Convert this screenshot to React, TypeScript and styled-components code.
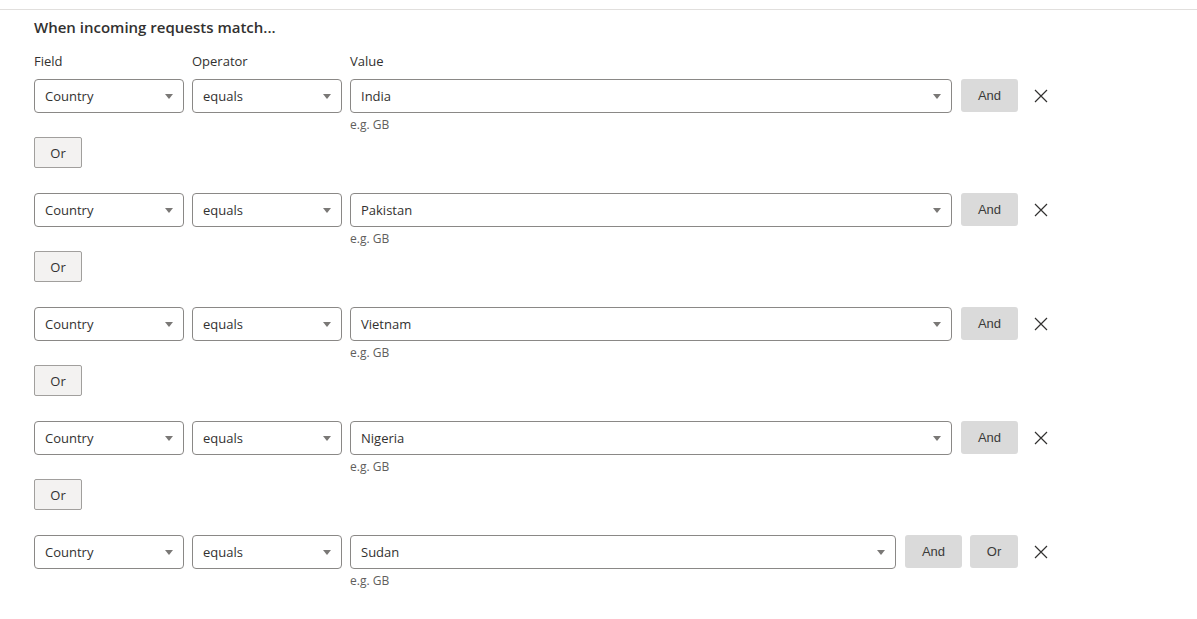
import styled, { createGlobalStyle } from "styled-components";

const GlobalStyle = createGlobalStyle`
  body {
    margin: 0;
    background: #ffffff;
    font-family: "Open Sans", "Noto Sans", sans-serif;
    color: #323130;
  }
`;

const Page = styled.div`
  border-top: 1px solid #e1dfdd;
  margin-top: 9px;
  padding: 7px 0 24px 34px;
`;

const Heading = styled.h3`
  margin: 0 0 14px;
  font-size: 15px;
  font-weight: 600;
  line-height: 20px;
  color: #323130;
`;

const LabelRow = styled.div`
  display: flex;
  gap: 8px;
  width: 984px;
  margin-bottom: 8px;
`;

const FieldLabel = styled.div<{ $w?: number }>`
  width: ${(p) => (p.$w ? `${p.$w}px` : "auto")};
  flex: ${(p) => (p.$w ? "none" : 1)};
  font-size: 13px;
  line-height: 20px;
`;

const Group = styled.div`
  margin-bottom: 25px;
`;

const Row = styled.div`
  display: flex;
  align-items: flex-start;
`;

const Fields = styled.div`
  display: flex;
  align-items: flex-start;
  gap: 8px;
  width: 984px;
`;

const Cell = styled.div<{ $w?: number }>`
  width: ${(p) => (p.$w ? `${p.$w}px` : "auto")};
  flex: ${(p) => (p.$w ? "none" : 1)};
  min-width: 0;
`;

const Select = styled.div`
  box-sizing: border-box;
  height: 34px;
  display: flex;
  align-items: center;
  justify-content: space-between;
  padding: 0 10px;
  border: 1px solid #8a8886;
  border-radius: 4px;
  font-size: 13px;
  color: #323130;
  background: #fff;
`;

const Caret = styled.span`
  width: 0;
  height: 0;
  border-left: 4px solid transparent;
  border-right: 4px solid transparent;
  border-top: 5px solid #7a7876;
`;

const Hint = styled.div`
  font-size: 12px;
  line-height: 18px;
  color: #605e5c;
  margin-top: 3px;
`;

const Buttons = styled.div`
  display: flex;
  gap: 8px;
  margin-left: 1px;
`;

const GreyButton = styled.button<{ $w: number }>`
  box-sizing: border-box;
  width: ${(p) => p.$w}px;
  height: 33px;
  border: none;
  border-radius: 3px;
  background: #dadada;
  color: #3b3a39;
  font-family: "Liberation Sans", Arial, sans-serif;
  font-size: 13px;
  padding: 0;
`;

const CloseButton = styled.button`
  width: 32px;
  height: 34px;
  margin-left: 7px;
  border: none;
  background: transparent;
  display: flex;
  align-items: center;
  justify-content: center;
  padding: 0;
  color: #323130;
`;

const OrButton = styled.button`
  box-sizing: border-box;
  width: 48px;
  height: 31px;
  margin-top: 3px;
  border: 1px solid #a19f9d;
  border-radius: 2px;
  background: #f3f2f1;
  color: #323130;
  font-family: "Open Sans", "Noto Sans", sans-serif;
  font-size: 13px;
  padding: 0;
`;

const countries = ["India", "Pakistan", "Vietnam", "Nigeria", "Sudan"];

function Cross() {
  return (
    <svg width="14" height="14" viewBox="0 0 14 14">
      <path d="M1 1L13 13M13 1L1 13" stroke="#323130" strokeWidth="1.2" />
    </svg>
  );
}

export default function App() {
  return (
    <>
      <GlobalStyle />
      <Page>
        <Heading>When incoming requests match...</Heading>
        <LabelRow>
          <FieldLabel $w={150}>Field</FieldLabel>
          <FieldLabel $w={150}>Operator</FieldLabel>
          <FieldLabel>Value</FieldLabel>
        </LabelRow>
        {countries.map((c, i) => {
          const last = i === countries.length - 1;
          return (
            <Group key={c}>
              <Row>
                <Fields>
                  <Cell $w={150}>
                    <Select>
                      Country
                      <Caret />
                    </Select>
                  </Cell>
                  <Cell $w={150}>
                    <Select>
                      equals
                      <Caret />
                    </Select>
                  </Cell>
                  <Cell>
                    <Select>
                      {c}
                      <Caret />
                    </Select>
                    <Hint>e.g. GB</Hint>
                  </Cell>
                  <Buttons>
                    <GreyButton $w={57}>And</GreyButton>
                    {last && <GreyButton $w={48}>Or</GreyButton>}
                  </Buttons>
                </Fields>
                <CloseButton aria-label="Remove">
                  <Cross />
                </CloseButton>
              </Row>
              {!last && <OrButton>Or</OrButton>}
            </Group>
          );
        })}
      </Page>
    </>
  );
}
